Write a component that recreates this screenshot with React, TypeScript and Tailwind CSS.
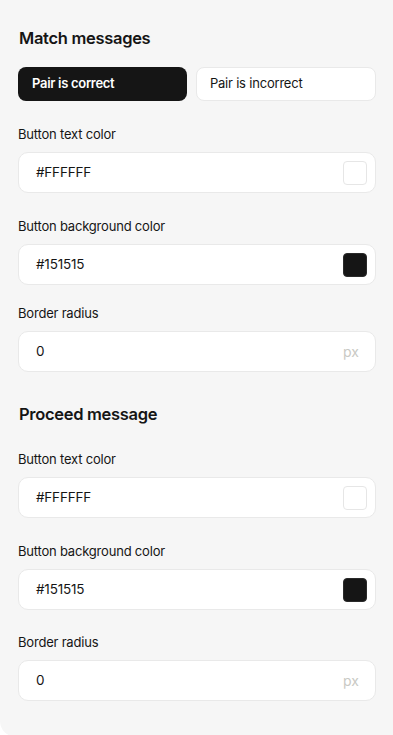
import React from "react";

const font = { fontFamily: "Inter, 'Noto Sans', sans-serif" };

function Label({ children }: { children: React.ReactNode }) {
  return <div className="text-[13px] leading-5 font-normal text-[#151515] mb-2 tracking-[-0.2px]">{children}</div>;
}

function ColorField({ label, value, swatch, mt }: { label: string; value: string; swatch: "white" | "dark"; mt: string }) {
  return (
    <div className={mt}>
      <Label>{label}</Label>
      <div className="h-[41px] bg-white border border-[#e9e9e9] rounded-[10px] flex items-center pl-[17px] pr-2">
        <span className="flex-1 text-[13.5px] text-[#151515] tracking-[-0.2px]">{value}</span>
        <span
          className={
            swatch === "white"
              ? "w-6 h-6 rounded-[4px] bg-white border border-[#e6e6e6]"
              : "w-6 h-6 rounded-[4px] bg-[#151515] border border-[#2a2a2a]"
          }
        />
      </div>
    </div>
  );
}

function RadiusField({ mt }: { mt: string }) {
  return (
    <div className={mt}>
      <Label>Border radius</Label>
      <div className="h-[41px] bg-white border border-[#e9e9e9] rounded-[10px] flex items-center pl-[17px] pr-4">
        <span className="flex-1 text-[13.5px] text-[#151515]">0</span>
        <span className="text-[14px] text-[#c9c9c4]">px</span>
      </div>
    </div>
  );
}

export default function App() {
  return (
    <div style={font} className="min-h-[737px] bg-[#f6f6f6] rounded-bl-2xl pl-[18px] pr-[17px] pt-[26px] pb-8">
      <h2 className="text-[16.5px] leading-6 font-semibold text-[#151515] tracking-[-0.3px] pl-px">Match messages</h2>
      <div className="mt-[17px] flex gap-[9px]">
        <button className="flex-auto h-[34px] rounded-[8px] bg-[#151515] text-white text-[13px] font-semibold text-left pl-[14px] tracking-[-0.3px]">
          Pair is correct
        </button>
        <button className="flex-auto h-[34px] rounded-[8px] bg-white border border-[#e9e9e9] text-[#151515] text-[13px] font-normal text-left pl-[13px] tracking-[-0.2px]">
          Pair is incorrect
        </button>
      </div>
      <ColorField mt="mt-[23px]" label="Button text color" value="#FFFFFF" swatch="white" />
      <ColorField mt="mt-[23px]" label="Button background color" value="#151515" swatch="dark" />
      <RadiusField mt="mt-[18px]" />

      <h2 className="mt-[30px] text-[16.5px] leading-6 font-semibold text-[#151515] tracking-[-0.3px] pl-px">Proceed message</h2>
      <ColorField mt="mt-[23px]" label="Button text color" value="#FFFFFF" swatch="white" />
      <ColorField mt="mt-[23px]" label="Button background color" value="#151515" swatch="dark" />
      <RadiusField mt="mt-[22px]" />
    </div>
  );
}
